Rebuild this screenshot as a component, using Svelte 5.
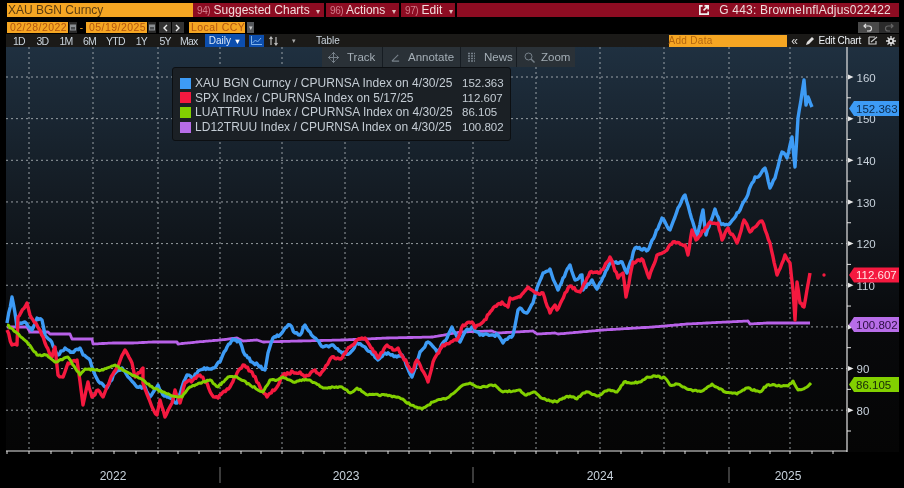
<script>
    const yTicks = [160, 150, 140, 130, 120, 110, 100, 90, 80];
    const yOf = (v) => 77 + (160 - v) * 4.165;
    const vGrid = [29, 93, 158, 220, 282, 345, 409, 473, 536, 600, 664, 729, 790];
    const xTicks = [29, 51, 72, 93, 114, 136, 158, 178, 199, 220, 241, 261, 282, 303, 324, 345, 366, 388, 409, 430, 451, 473, 494, 515, 536, 557, 578, 600, 621, 642, 664, 685, 707, 729, 750, 770, 790, 812, 833];
    const years = [['2022', 113], ['2023', 346], ['2024', 600], ['2025', 788]];
    const yearBreaks = [220, 473, 729];

    // traced by eye off the reference, pixel coordinates
    const blue = [[7,323],[12,297],[15,313],[17,327],[20,323],[25,322],[32,330],[37,318],[42,320],[45,335],[50,340],[58,355],[65,348],[72,352],[80,348],[83,355],[90,360],[95,375],[100,383],[107,388],[115,373],[122,368],[128,377],[137,387],[145,387],[150,397],[158,385],[163,395],[170,398],[177,403],[182,387],[187,375],[192,378],[200,370],[207,368],[213,368],[220,362],[227,347],[233,339],[240,342],[245,355],[252,362],[258,365],[265,370],[268,353],[273,338],[280,335],[285,328],[290,325],[295,333],[300,335],[305,325],[310,332],[317,340],[323,347],[333,345],[342,353],[350,353],[357,343],[365,347],[378,360],[385,353],[397,357],[402,355],[412,377],[420,352],[428,342],[437,352],[447,338],[452,327],[460,342],[465,332],[472,327],[480,335],[492,335],[498,335],[503,343],[513,335],[518,310],[520,308],[527,313],[533,303],[537,288],[543,273],[550,269],[555,283],[558,290],[563,278],[570,265],[575,280],[582,275],[583,290],[592,280],[597,289],[610,263],[622,262],[627,273],[635,248],[648,250],[655,235],[662,218],[670,230],[678,208],[685,195],[690,213],[697,237],[703,210],[706,235],[715,209],[720,223],[728,225],[740,210],[745,200],[755,177],[760,175],[765,168],[770,188],[775,178],[782,152],[787,158],[792,137],[795,167],[798,118],[802,93],[804,80],[806,105],[808,97],[812,107]];
    const red = [[7,330],[12,345],[17,345],[18,317],[27,303],[30,315],[40,330],[45,343],[52,357],[55,347],[58,375],[63,377],[68,363],[77,360],[83,405],[88,382],[92,397],[98,390],[103,397],[110,380],[117,367],[125,350],[132,363],[135,377],[143,368],[143,383],[152,407],[157,415],[160,400],[165,417],[172,403],[175,390],[180,403],[185,383],[193,380],[200,375],[207,383],[212,395],[218,398],[230,387],[237,373],[243,365],[252,372],[260,387],[267,397],[277,387],[283,375],[293,372],[300,372],[305,377],[315,370],[320,375],[332,357],[342,358],[347,350],[357,340],[365,338],[378,358],[387,345],[393,350],[398,348],[412,372],[417,360],[422,370],[428,382],[433,362],[443,345],[457,340],[463,325],[472,322],[475,328],[483,322],[492,310],[502,302],[508,307],[510,298],[520,297],[528,287],[537,293],[543,293],[550,313],[555,305],[557,310],[565,293],[570,286],[580,292],[590,272],[600,273],[610,257],[618,278],[623,273],[626,297],[633,262],[643,260],[649,278],[657,255],[667,250],[673,242],[685,245],[688,255],[692,230],[696,240],[710,222],[718,223],[722,240],[728,228],[737,243],[744,220],[750,232],[762,221],[770,243],[777,275],[785,255],[790,263],[793,290],[795,320],[797,282],[800,303],[804,307],[810,273]];
    const green = [[7,325],[17,333],[27,342],[37,355],[47,355],[55,362],[68,357],[80,375],[85,369],[95,370],[103,370],[115,365],[127,372],[143,380],[153,388],[170,395],[182,397],[190,387],[200,383],[210,380],[218,387],[228,377],[237,377],[250,385],[263,392],[270,380],[277,380],[283,377],[293,382],[300,380],[310,380],[323,388],[342,387],[350,393],[357,388],[368,395],[385,395],[398,397],[415,407],[422,409],[433,402],[447,398],[463,385],[470,383],[478,387],[495,385],[503,392],[520,390],[525,395],[535,392],[540,397],[550,401],[557,402],[563,398],[570,396],[577,399],[583,393],[588,392],[598,396],[608,390],[617,392],[624,382],[630,383],[640,382],[647,377],[655,376],[665,378],[670,385],[677,384],[687,389],[693,391],[702,391],[712,384],[725,392],[737,394],[747,388],[760,392],[767,385],[788,386],[793,381],[798,390],[805,388],[811,383]];
    const purple = [[7,327],[27,327],[30,332],[48,332],[50,334],[70,334],[72,339],[92,339],[93,344],[113,343],[133,343],[153,342],[177,342],[178,344],[197,342],[220,340],[237,338],[243,341],[257,340],[263,342],[300,341],[343,340],[387,338],[433,337],[460,332],[492,331],[497,333],[533,331],[537,334],[555,333],[558,334],[603,330],[653,327],[687,324],[727,322],[748,321],[750,324],[767,323],[810,323]];

    // resample with a small repeatable wobble so the lines look like daily data
    function rough(points, amp) {
        let seed = 7;
        const rnd = () => {
            seed = (seed * 16807) % 2147483647;
            return seed / 2147483647 - 0.5;
        };
        const out = [];
        for (let i = 0; i < points.length - 1; i++) {
            const [x0, y0] = points[i];
            const [x1, y1] = points[i + 1];
            const n = Math.max(1, Math.round((x1 - x0) / 1.5));
            for (let k = 0; k < n; k++) {
                const t = k / n;
                const w = k === 0 ? 0 : rnd() * amp;
                out.push((x0 + (x1 - x0) * t).toFixed(1) + ',' + (y0 + (y1 - y0) * t + w).toFixed(1));
            }
        }
        out.push(points[points.length - 1].join(','));
        return out.join(' ');
    }

    const series = [
        { color: '#b861e8', pts: rough(purple, 0), w: 2.8 },
        { color: '#3d9bf5', pts: rough(blue, 2.6), w: 3.4 },
        { color: '#f5193f', pts: rough(red, 2.8), w: 3.4 },
        { color: '#82d000', pts: rough(green, 1.6), w: 3 }
    ];

    const tags = [
        { label: '152.363', y: 108.5, fill: '#3d9bf5', ink: '#0c2a4a' },
        { label: '112.607', y: 275, fill: '#f5193f', ink: '#ffe4e4' },
        { label: '100.802', y: 324.5, fill: '#b76de8', ink: '#2a0e40' },
        { label: '86.105', y: 384.5, fill: '#82d000', ink: '#16280a' }
    ];

    const legend = [
        { color: '#3d9bf5', name: 'XAU BGN Curncy / CPURNSA Index on 4/30/25', value: '152.363' },
        { color: '#f5193f', name: 'SPX Index / CPURNSA Index on 5/17/25', value: '112.607' },
        { color: '#82d000', name: 'LUATTRUU Index / CPURNSA Index on 4/30/25', value: '86.105' },
        { color: '#b76de8', name: 'LD12TRUU Index / CPURNSA Index on 4/30/25', value: '100.802' }
    ];

    const ranges = ['1D', '3D', '1M', '6M', 'YTD', '1Y', '5Y', 'Max'];
</script>

{#snippet calendar()}
    <svg class="cal" width="8" height="11" viewBox="0 0 8 11">
        <rect width="8" height="11" fill="#2a2a2a" />
        <rect x="1" y="2.5" width="6" height="6" fill="#8b8f93" />
        <rect x="2" y="5" width="4" height="2.5" fill="#4a4d50" />
    </svg>
{/snippet}

<div class="screen">
    <div class="title-row">
        <div class="ticker">XAU BGN Curncy</div>
        <div class="menu">
            <button class="menu-item charts"><span class="num">94)</span> Suggested Charts <span class="caret">▾</span></button>
            <button class="menu-item actions"><span class="num">96)</span> Actions <span class="caret">▾</span></button>
            <button class="menu-item edit"><span class="num">97)</span> Edit <span class="caret">▾</span></button>
            <div class="doc">
                <svg width="12" height="12" viewBox="0 0 13 13"><path d="M5 2H2v9h9V8M7 2h4v4M11 2L6 7" fill="none" stroke="#eee" stroke-width="1.8" /></svg>
                <span>G 443: BrowneInflAdjus022422</span>
            </div>
        </div>
    </div>

    <div class="date-row">
        <div class="field date">02/28/2022</div>
        {@render calendar()}
        <span class="dash">-</span>
        <div class="field date">05/19/2025</div>
        {@render calendar()}
        <div class="step first"><svg width="6" height="8" viewBox="0 0 6 8"><path d="M5 1L2 4l3 3" fill="none" stroke="#eee" stroke-width="1.4" /></svg></div>
        <div class="step"><svg width="6" height="8" viewBox="0 0 6 8"><path d="M1 1l3 3-3 3" fill="none" stroke="#eee" stroke-width="1.4" /></svg></div>
        <div class="field ccy">Local CCY</div>
        <div class="drop">▾</div>
        <div class="undo">
            <span class="undo-on"><svg width="10" height="9" viewBox="0 0 10 9"><path d="M3 1L1 3l2 2M1 3h5a2.5 2.5 0 0 1 0 5H4" fill="none" stroke="#ddd" stroke-width="1.2" /></svg></span>
            <span class="undo-off"><svg width="10" height="9" viewBox="0 0 10 9"><path d="M7 1l2 2-2 2M9 3H4a2.5 2.5 0 0 0 0 5h2" fill="none" stroke="#666" stroke-width="1.2" /></svg></span>
        </div>
    </div>

    <div class="tool-row">
        <div class="ranges">
            {#each ranges as r}
                <span class="range">{r}</span>
            {/each}
        </div>
        <span class="daily">Daily <span class="daily-caret">▼</span></span>
        <span class="line-btn"><svg width="11" height="9" viewBox="0 0 11 9"><path d="M0.5 0v8.5H11M1.5 7l3-3 2 2 3.5-4" fill="none" stroke="#7fb2ea" stroke-width="1" /></svg></span>
        <span class="bars"><svg width="9" height="10" viewBox="0 0 9 10"><path d="M2 1v8M0.5 3L2 1l1.5 2M7 1v8M5.5 7L7 9l1.5-2" fill="none" stroke="#bbb" stroke-width="1.2" /></svg></span>
        <span class="tiny-caret">▾</span>
        <span class="table">Table</span>
        <div class="add-data">Add Data</div>
        <span class="chev">«</span>
        <svg class="pencil" width="9" height="9" viewBox="0 0 9 9"><path d="M0 9l1-3 5-5 2 2-5 5z" fill="#ddd" /></svg>
        <span class="edit-chart">Edit Chart</span>
        <svg class="box-icon" width="10" height="9" viewBox="0 0 10 9"><path d="M1 1h6M1 1v7h7V5M3 6l6-5" fill="none" stroke="#ccc" stroke-width="1.2" /></svg>
        <svg class="gear" width="10" height="10" viewBox="0 0 10 10"><circle cx="5" cy="5" r="2.2" fill="none" stroke="#ddd" stroke-width="1.8" /><path d="M5 0v2M5 8v2M0 5h2M8 5h2M1.5 1.5l1.4 1.4M7.1 7.1l1.4 1.4M8.5 1.5L7.1 2.9M2.9 7.1L1.5 8.5" stroke="#ddd" stroke-width="1.3" /></svg>
    </div>

    <div class="chart">
        <svg class="plot" width="904" height="441" viewBox="0 47 904 441">
            <defs>
                <linearGradient id="bg" x1="0" y1="0" x2="0" y2="1">
                    <stop offset="0" stop-color="#1f3040" />
                    <stop offset="0.35" stop-color="#141c24" />
                    <stop offset="0.7" stop-color="#08090b" />
                    <stop offset="1" stop-color="#050505" />
                </linearGradient>
            </defs>
            <rect x="6" y="47" width="893" height="405" fill="url(#bg)" />

            {#each yTicks as v}
                <line x1="6" x2="847" y1={yOf(v)} y2={yOf(v)} class="grid" />
            {/each}
            {#each vGrid as x}
                <line x1={x} x2={x} y1="47" y2="451" class="grid" />
            {/each}

            {#each series as s}
                <polyline points={s.pts} fill="none" stroke={s.color} stroke-width={s.w} stroke-linejoin="round" />
            {/each}
            <circle cx="824" cy="275" r="1.7" fill="#f5193f" />

            <line x1="847" x2="847" y1="47" y2="452" class="axis" />
            <line x1="6" x2="847" y1="451" y2="451" class="axis" />
            {#each xTicks as x}
                <line x1={x} x2={x} y1="451" y2="454" class="axis thin" />
            {/each}
            <line x1="7" x2="7" y1="451" y2="454" class="axis thin" />
            {#each yTicks as v}
                <path d="M848 {yOf(v) - 2.5} l5.5 2.5 l-5.5 2.5 z" fill="#e8e8e8" />
                <line x1="847" x2="851" y1={yOf(v) + 20.8} y2={yOf(v) + 20.8} class="axis thin" />
                <!-- the 100 label sits fully behind the 100.802 tag -->
                {#if v !== 100}
                    <text x="856.5" y={yOf(v) + 4.6} class="ytext">{v}</text>
                {/if}
            {/each}

            {#each tags as t}
                <path d="M849 {t.y} l5 -7.5 H899 V{t.y + 7.5} H854 z" fill={t.fill} />
                <text x="856" y={t.y + 4.3} class="tag" fill={t.ink}>{t.label}</text>
            {/each}

            {#each yearBreaks as x}
                <line x1={x} x2={x} y1="467" y2="483" class="axis year-break" />
            {/each}
            {#each years as [label, x]}
                <text {x} y="480" class="year">{label}</text>
            {/each}
        </svg>

        <div class="float-bar">
            <span class="float-item track"><svg width="11" height="11" viewBox="0 0 11 11"><path d="M5.5 0v11M0 5.5h11M3.5 2.5l2-2 2 2M3.5 8.5l2 2 2-2M2.5 3.5l-2 2 2 2M8.5 3.5l2 2-2 2" fill="none" stroke="#77818a" stroke-width="1" /></svg>Track</span>
            <span class="float-item annotate"><svg width="9" height="9" viewBox="0 0 10 10"><path d="M1 9l7-7M1 9h8" fill="none" stroke="#77818a" stroke-width="1.2" /></svg>Annotate</span>
            <span class="float-item news"><svg width="9" height="10" viewBox="0 0 9 10"><path d="M1 1.5h7M1 4h7M1 6.5h7M1 9h7" stroke="#77818a" stroke-width="1.3" stroke-dasharray="2 1" /></svg>News</span>
            <span class="float-item zoom"><svg width="11" height="11" viewBox="0 0 11 11"><circle cx="4.5" cy="4.5" r="3.5" fill="none" stroke="#77818a" stroke-width="1" /><path d="M7 7l3.5 3.5" stroke="#77818a" stroke-width="1.4" /></svg>Zoom</span>
        </div>

        <div class="legend">
            {#each legend as row}
                <span class="swatch" style="background: {row.color}"></span>
                <span class="name">{row.name}</span>
                <span class="val">{row.value}</span>
            {/each}
        </div>
    </div>
</div>

<style>
    :global(body) {
        margin: 0;
        background: #000;
    }

    button {
        font: inherit;
        border: none;
        color: inherit;
        padding: 0;
    }

    /* the source capture is a soft, upscaled image */
    .screen {
        width: 904px;
        height: 488px;
        background: #000;
        overflow: hidden;
        font-family: "Liberation Sans", Arial, sans-serif;
        color: #ddd;
        display: flex;
        flex-direction: column;
        filter: blur(0.35px);
    }

    .title-row {
        display: flex;
        height: 14px;
        margin: 3px 5px 0 7px;
    }

    .ticker {
        width: 186px;
        background: #f5a623;
        color: #5c3d10;
        font-size: 12px;
        line-height: 14px;
        padding-left: 1px;
        box-sizing: border-box;
    }

    .menu {
        flex: 1;
        display: flex;
        gap: 2px;
        background: #000;
    }

    .menu-item {
        background: #8d0c22;
        font-size: 12px;
        line-height: 14px;
        color: #f0dcdc;
        text-align: left;
        padding-left: 4px;
        box-sizing: border-box;
        white-space: nowrap;
    }

    .charts { width: 131px; }
    .actions { width: 73px; }
    .edit { width: 54px; }

    .num {
        color: #d07c8a;
        font-size: 10px;
        letter-spacing: -0.4px;
    }

    .caret {
        font-size: 8px;
        color: #e0c0c0;
        margin-left: 3px;
    }

    .doc {
        flex: 1;
        background: #8d0c22;
        display: flex;
        justify-content: flex-end;
        align-items: center;
        gap: 9px;
        padding-right: 8px;
        font-size: 12px;
        letter-spacing: 0.2px;
        color: #ecdcdc;
    }

    .date-row {
        display: flex;
        align-items: stretch;
        height: 11px;
        margin: 5px 5px 0 7px;
    }

    .field {
        background: #f5a623;
        color: #b3560f;
        font-size: 10.5px;
        line-height: 11px;
        letter-spacing: 0.45px;
        box-sizing: border-box;
        white-space: nowrap;
        overflow: hidden;
    }

    .date {
        width: 61px;
        padding-left: 3px;
    }

    .cal {
        margin-left: 1px;
        flex: none;
    }

    .dash {
        width: 9px;
        text-align: center;
        font-size: 10px;
        line-height: 11px;
        color: #f5a623;
    }

    .step {
        width: 12px;
        margin-left: 1px;
        background: #333;
        display: flex;
        align-items: center;
        justify-content: center;
    }

    .step.first {
        margin-left: 3px;
    }

    .ccy {
        width: 56px;
        margin-left: 5px;
        padding-left: 2px;
    }

    .drop {
        width: 7px;
        margin-left: 2px;
        background: #55585c;
        color: #ccc;
        font-size: 7px;
        line-height: 11px;
        text-align: center;
    }

    .undo {
        margin-left: auto;
        display: flex;
        width: 41px;
    }

    .undo span {
        flex: 1;
        display: flex;
        align-items: center;
        justify-content: center;
    }

    .undo-on { background: #4a4a4a; }
    .undo-off { background: #2b2b2b; }

    .tool-row {
        display: flex;
        align-items: center;
        height: 13px;
        margin: 1px 5px 0 6px;
        background: #1b1a18;
        font-size: 10px;
        color: #c9d3dc;
    }

    .ranges {
        display: flex;
        margin-left: 1px;
        width: 198px;
        font-size: 10.5px;
        letter-spacing: -0.8px;
    }

    .range {
        width: 23.6px;
        text-align: center;
    }

    .range:nth-child(5) { width: 28px; }
    .range:nth-child(6) { width: 24px; }

    .daily {
        width: 40px;
        height: 13px;
        background: #0c4eae;
        color: #dce8f8;
        text-align: center;
        line-height: 13px;
    }

    .daily-caret {
        font-size: 7.5px;
        color: #fff;
    }

    .line-btn {
        width: 15px;
        height: 12px;
        margin-left: 4px;
        background: #0c4eae;
        display: flex;
        align-items: center;
        justify-content: center;
    }

    .bars {
        width: 18px;
        display: flex;
        justify-content: center;
    }

    .tiny-caret {
        width: 24px;
        text-align: center;
        font-size: 7px;
        color: #aaa;
    }

    .table {
        width: 31px;
        margin-left: 10px;
    }

    .add-data {
        width: 118px;
        height: 12px;
        margin-left: auto;
        background: #f5a623;
        color: #b3660f;
        line-height: 12px;
        letter-spacing: 0.3px;
    }

    .chev {
        width: 16px;
        text-align: center;
        font-size: 12px;
        line-height: 10px;
        color: #ddd;
    }

    .pencil { margin-left: 3px; }

    .edit-chart {
        margin-left: 4px;
        color: #eef2f6;
        white-space: nowrap;
        letter-spacing: -0.2px;
    }

    .box-icon { margin-left: 7px; }
    .gear { margin-left: 8px; margin-right: 3px; }

    .chart {
        position: relative;
        flex: 1;
    }

    .plot {
        display: block;
    }

    .grid {
        stroke: #b8bec2;
        stroke-width: 1;
        stroke-dasharray: 2 3;
        opacity: 0.8;
    }

    .axis {
        stroke: #e4e4e4;
        stroke-width: 1.2;
    }

    .axis.thin {
        stroke-width: 1;
    }

    .year-break {
        stroke: #777;
        stroke-width: 1;
    }

    .ytext {
        font-size: 11.5px;
        fill: #c8d2dc;
    }

    .tag {
        font-size: 11.5px;
    }

    .year {
        font-size: 12px;
        fill: #c8d2dc;
        text-anchor: middle;
    }

    .float-bar {
        position: absolute;
        left: 322px;
        top: 0;
        width: 253px;
        height: 20px;
        display: flex;
        gap: 1px;
        background: #161c22;
    }

    .float-item {
        background: #2a3137;
        color: #a4aeb6;
        font-size: 11.5px;
        display: flex;
        align-items: center;
        box-sizing: border-box;
        white-space: nowrap;
    }

    .track { width: 60px; padding-left: 6px; gap: 8px; }
    .annotate { width: 77px; padding-left: 8px; gap: 8px; }
    .news { width: 55px; padding-left: 6px; gap: 8px; }
    .zoom { width: 58px; padding-left: 7px; gap: 6px; }

    .legend {
        position: absolute;
        left: 172px;
        top: 20px;
        width: 339px;
        height: 74px;
        box-sizing: border-box;
        padding: 8px 6px 0 7px;
        background: #1b2025;
        border: 1px solid #0c0f12;
        border-radius: 3px;
        display: grid;
        grid-template-columns: 11px 1fr 42px;
        grid-auto-rows: 14.6px;
        column-gap: 4px;
        align-items: center;
        font-size: 12px;
        color: #c4ccd4;
    }

    .swatch {
        width: 11px;
        height: 11px;
    }

    .name {
        white-space: nowrap;
        letter-spacing: 0.03px;
    }

    .val {
        font-size: 11.5px;
    }
</style>
